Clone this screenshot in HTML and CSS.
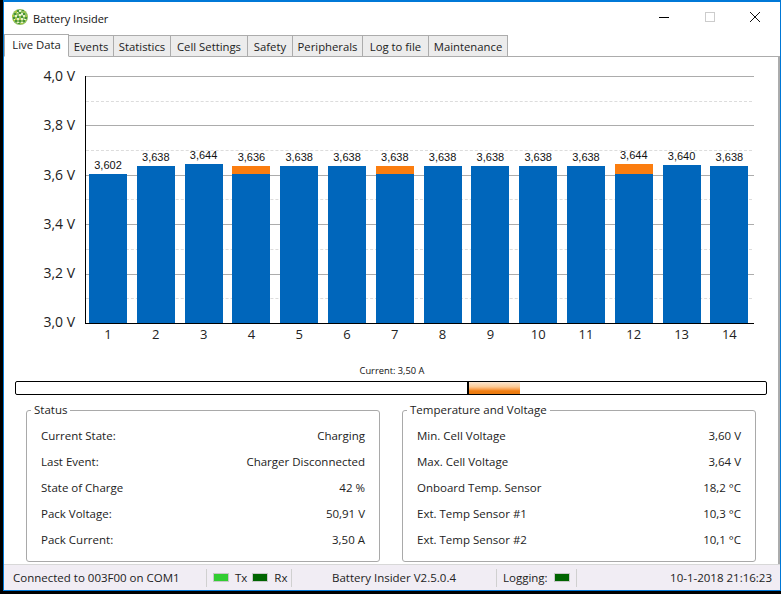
FILE: index.html
```html
<!DOCTYPE html>
<html lang="en">
<head>
<meta charset="utf-8">
<title>Battery Insider</title>
<link rel="stylesheet" href="styles.css">
</head>
<body>
<div class="window">
  <header class="titlebar">
    <svg class="logo" width="18" height="18" viewBox="0 0 18 18">
      <circle cx="9" cy="9" r="8" fill="#8fbf5f"/>
      <path d="M6 2h2v2H6zM11 2h2v1h-2zM3 5h2v2H3zM8 4h2v2H8zM12 5h2v2h-2zM2 9h2v2H2zM6 8h2v2H6zM10 8h2v2h-2zM14 9h2v2h-2zM4 12h2v2H4zM8 12h2v2H8zM12 12h2v2h-2zM7 15h2v1H7z" fill="#47923a"/>
      <path d="M8 2h2v2H8zM5 4h2v1H5zM10 5h2v2h-2zM4 7h2v2H4zM8 6h2v2H8zM12 7h2v2h-2zM6 10h2v2H6zM10 10h2v2h-2zM3 11h1v1H3zM13 11h2v1h-2zM6 14h2v1H6zM10 14h2v1h-2z" fill="#e2efcd"/>
      <path d="M4 3h2v2H4zM13 3h1v2h-1zM1 7h2v2H1zM15 7h1v2h-1zM4 10h2v2H4zM8 10h2v2H8zM2 12h2v1H2zM14 12h1v1h-1zM10 15h2v1h-2z" fill="#a9c83c"/>
    </svg>
    <span class="title">Battery Insider</span>
    <div class="caption">
      <svg class="cap" width="46" height="30" viewBox="0 0 46 30"><path d="M19 15.500h10" stroke="#000" fill="none"/></svg>
      <svg class="cap" width="46" height="30" viewBox="0 0 46 30"><rect x="19.500" y="10.500" width="9" height="9" stroke="#ccc" fill="none"/></svg>
      <svg class="cap" width="46" height="30" viewBox="0 0 46 30"><path d="M18 10l10 10M28 10L18 20" stroke="#111" fill="none"/></svg>
    </div>
  </header>
  <nav class="tabs">
    <span class="tab active">Live Data</span>
    <span class="tab w-events">Events</span>
    <span class="tab w-stats">Statistics</span>
    <span class="tab w-cell">Cell Settings</span>
    <span class="tab w-safety">Safety</span>
    <span class="tab w-peri">Peripherals</span>
    <span class="tab w-log">Log to file</span>
    <span class="tab w-maint">Maintenance</span>
  </nav>
  <main class="content">
    <section class="chart">
      <div class="yaxis">
        <span>4,0 V</span><span>3,8 V</span><span>3,6 V</span><span>3,4 V</span><span>3,2 V</span><span>3,0 V</span>
      </div>
      <div class="plotwrap">
        <div class="plot">
          <div class="grid">
            <i class="line"></i><i class="dash"></i><i class="line"></i><i class="dash"></i><i class="line"></i><i class="dash"></i><i class="line"></i><i class="dash"></i><i class="line"></i><i class="dash"></i>
          </div>
          <div class="bars">
            <div class="col"><b class="val">3,602</b><div class="bar" style="height:149px"></div></div>
            <div class="col"><b class="val">3,638</b><div class="bar" style="height:157px"></div></div>
            <div class="col"><b class="val">3,644</b><div class="bar" style="height:159px"></div></div>
            <div class="col"><b class="val">3,636</b><div class="bal" style="height:8px"></div><div class="bar" style="height:149px"></div></div>
            <div class="col"><b class="val">3,638</b><div class="bar" style="height:157px"></div></div>
            <div class="col"><b class="val">3,638</b><div class="bar" style="height:157px"></div></div>
            <div class="col"><b class="val">3,638</b><div class="bal" style="height:8px"></div><div class="bar" style="height:149px"></div></div>
            <div class="col"><b class="val">3,638</b><div class="bar" style="height:157px"></div></div>
            <div class="col"><b class="val">3,638</b><div class="bar" style="height:157px"></div></div>
            <div class="col"><b class="val">3,638</b><div class="bar" style="height:157px"></div></div>
            <div class="col"><b class="val">3,638</b><div class="bar" style="height:157px"></div></div>
            <div class="col"><b class="val">3,644</b><div class="bal" style="height:10px"></div><div class="bar" style="height:149px"></div></div>
            <div class="col"><b class="val">3,640</b><div class="bar" style="height:158px"></div></div>
            <div class="col"><b class="val">3,638</b><div class="bar" style="height:157px"></div></div>
          </div>
        </div>
        <div class="xaxis">
          <span>1</span><span>2</span><span>3</span><span>4</span><span>5</span><span>6</span><span>7</span><span>8</span><span>9</span><span>10</span><span>11</span><span>12</span><span>13</span><span>14</span>
        </div>
      </div>
    </section>
    <div class="current-label">Current: 3,50 A</div>
    <div class="meter">
      <div class="meter-half"></div>
      <div class="meter-fill"></div>
    </div>
    <div class="groups">
      <fieldset class="group">
        <legend>Status</legend>
        <div class="row"><span>Current State:</span><span>Charging</span></div>
        <div class="row"><span>Last Event:</span><span>Charger Disconnected</span></div>
        <div class="row"><span>State of Charge</span><span>42 %</span></div>
        <div class="row"><span>Pack Voltage:</span><span>50,91 V</span></div>
        <div class="row"><span>Pack Current:</span><span>3,50 A</span></div>
      </fieldset>
      <fieldset class="group">
        <legend>Temperature and Voltage</legend>
        <div class="row"><span>Min. Cell Voltage</span><span>3,60 V</span></div>
        <div class="row"><span>Max. Cell Voltage</span><span>3,64 V</span></div>
        <div class="row"><span>Onboard Temp. Sensor</span><span>18,2 °C</span></div>
        <div class="row"><span>Ext. Temp Sensor #1</span><span>10,3 °C</span></div>
        <div class="row"><span>Ext. Temp Sensor #2</span><span>10,1 °C</span></div>
      </fieldset>
    </div>
  </main>
  <footer class="statusbar">
    <span class="s-conn">Connected to 003F00 on COM1</span>
    <span class="s-io"><i class="led on"></i>Tx<i class="led off"></i>Rx</span>
    <span class="s-ver">Battery Insider V2.5.0.4</span>
    <span class="s-log">Logging:<i class="led off"></i></span>
    <span class="s-time">10-1-2018 21:16:23</span>
  </footer>
</div>
</body>
</html>
```
FILE: styles.css
```css
* { box-sizing: border-box; }
html, body { margin: 0; padding: 0; }
body { width: 781px; height: 594px; background: #000; font-family: "Open Sans", "Noto Sans", sans-serif; font-size: 11.5px; color: #222; overflow: hidden; }
.window { width: 778px; height: 591px; margin-left: 3px; border: 1px solid #0078d7; border-top-width: 2px; background: #fff; display: flex; flex-direction: column; }
.titlebar { height: 33px; flex: none; display: flex; align-items: center; padding-left: 7px; }
.logo { margin: -3px 4px 0 0; }
.title { font-size: 11px; color: #111; flex: 1; margin-top: -1px; }
.caption { display: flex; margin-right: 2px; align-self: flex-start; }
.cap { display: block; }
.tabs { height: 23px; flex: none; display: flex; align-items: flex-end; border-bottom: 1px solid #acacac; margin-top: -1px; }
.tab { height: 21px; background: #ececec; border: 1px solid #acacac; border-bottom: 0; margin-left: -1px; display: flex; align-items: center; justify-content: center; color: #222; font-size: 11.300px; }
.tab.active { height: 23px; width: 65px; margin-left: 0; margin-bottom: -1px; background: #fff; border-bottom: 1px solid #fff; position: relative; z-index: 1; padding-bottom: 2px; }
.w-events { width: 46px; }
.w-stats { width: 58px; }
.w-cell { width: 78px; }
.w-safety { width: 46px; }
.w-peri { width: 71px; }
.w-log { width: 67px; }
.w-maint { width: 80px; }
.content { flex: 1; border-right: 2px solid #acacac; display: flex; flex-direction: column; min-height: 0; }
.chart { display: flex; height: 306px; flex: none; padding-top: 19px; }
.yaxis { width: 81px; flex: none; display: flex; flex-direction: column; justify-content: space-between; margin-top: -10px; height: 266.500px; align-items: flex-end; padding-right: 10px; font-size: 14px; line-height: 20px; }
.plotwrap { width: 669px; flex: none; }
.plot { height: 248px; border-left: 1px solid #000; border-bottom: 1px solid #000; position: relative; }
.grid { position: absolute; inset: 0; display: flex; flex-direction: column; }
.grid i { display: block; height: 24.700px; flex: none; }
.line { border-top: 1px solid #acacac; }
.dash { border-top: 1px dashed #dcdcdc; margin-right: 2px; }
.bars { position: absolute; inset: 0; display: flex; align-items: stretch; gap: 9.800px; padding-left: 3px; }
.col { flex: none; width: 38px; display: flex; flex-direction: column; justify-content: flex-end; align-items: stretch; }
.val { font: 400 11px/14px "Liberation Sans", Arial, sans-serif; text-align: center; color: #111; margin-bottom: 2px; }
.bar { background: #0066bb; flex: none; }
.bal { background: #fb7d0f; flex: none; }
.xaxis { display: flex; gap: 9.800px; padding-left: 4px; font-size: 13px; line-height: 20px; color: #222; }
.xaxis span { flex: none; width: 38px; text-align: center; }
.current-label { height: 18px; font-size: 9.300px; line-height: 15px; text-align: center; color: #111; padding: 0 0 3px 2px; }
.meter { height: 14px; flex: none; margin: 0 11px 0 11px; border: 1px solid #000; border-radius: 2px; display: flex; background: #fff; }
.meter-half { width: 453px; border-right: 2px solid #000; }
.meter-fill { width: 51px; background: linear-gradient(#f9e6d2 0, #fcc994 40%, #f9a050 60%, #f07d10 75%, #e87a10 100%); }
.groups { display: flex; gap: 22px; padding-left: 22px; margin-top: 7px; }
.group { width: 354px; height: 160px; margin: 0; padding: 4px 14px 0 14px; border: 1px solid #a9a9a9; border-radius: 3px; display: block; min-inline-size: 0; }
.group legend { padding: 0 3px; margin-left: -10px; font-size: 11.500px; line-height: 16px; color: #222; }
.row { height: 26px; display: flex; justify-content: space-between; align-items: center; color: #222; }
.statusbar { height: 26px; flex: none; background: #f1edf4; display: flex; align-items: center; border-top: 1px solid #d8d8d8; color: #222; }
.statusbar > span { display: flex; align-items: center; height: 18px; border-right: 1px solid #d0d0d0; }
.s-conn { width: 203px; padding-left: 9px; }
.s-io { width: 85px; }
.s-ver { width: 205px; justify-content: center; }
.s-log { width: 80px; padding-left: 6px; }
.statusbar > .s-time { flex: 1; justify-content: flex-end; padding-right: 8px; border-right: 0; }
.led { display: inline-block; width: 16px; height: 9px; border: 1px solid #c8c8c8; flex: none; }
.led.on { background: #32cd32; margin: 0 6px 0 6px; }
.led.off { background: #006400; margin: 0 6px 0 5px; }
.s-log .led.off { margin: 0 0 0 6px; }
```
